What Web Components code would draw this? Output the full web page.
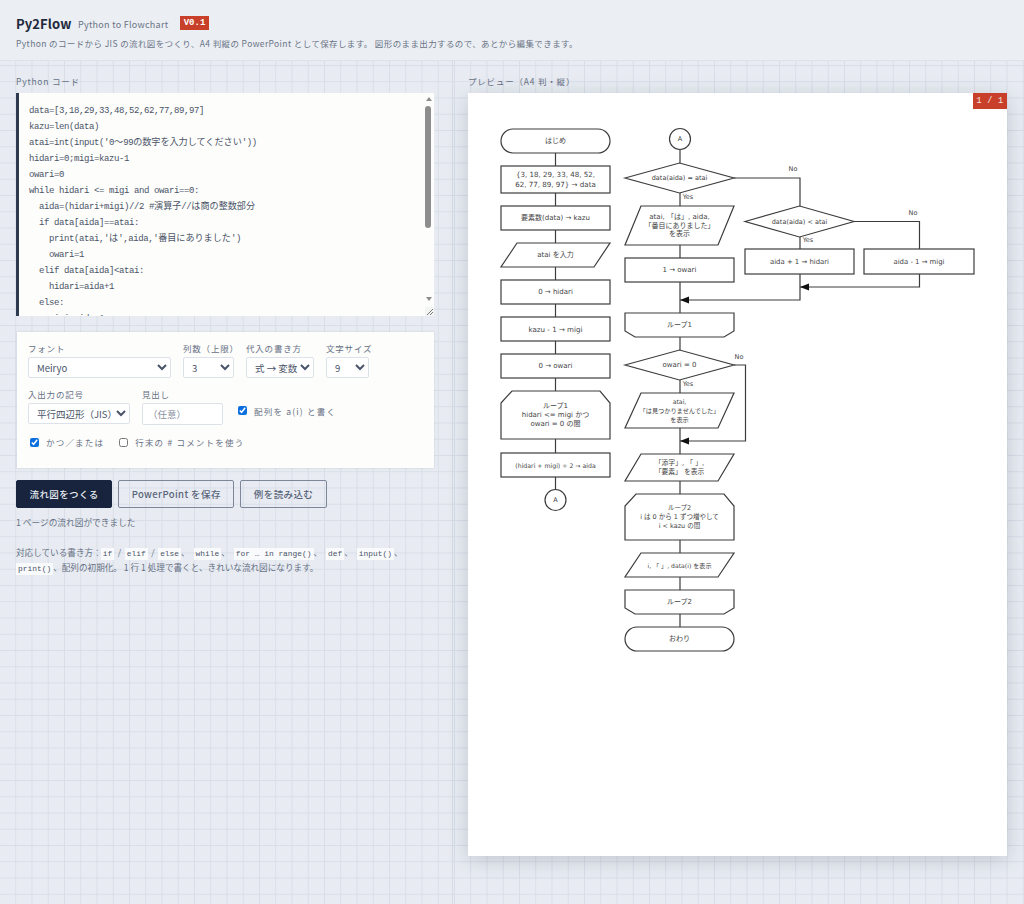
<!DOCTYPE html>
<html lang="ja">
<head>
<meta charset="utf-8">
<title>Py2Flow</title>
<style>
  html, body { margin: 0; padding: 0; }
  body {
    height: 904px;
    overflow: hidden;
    font-family: "Noto Sans CJK JP", "Noto Sans", sans-serif;
    color: #59647a;
    background-color: #e8ecf2;
    background-image:
      linear-gradient(#d8dde7 1px, transparent 1px),
      linear-gradient(90deg, #d8dde7 1px, transparent 1px);
    background-size: 16.25px 16.25px;
    background-position: 0 0, -1px 0;
  }
</style>
</head>
<body>
<py-app></py-app>

<script>
const MONO = `"Liberation Mono", "Noto Sans CJK JP", monospace`;

class AppHeader extends HTMLElement {
  constructor() {
    super();
    this.attachShadow({ mode: "open" });
    this.shadowRoot.innerHTML = `
    <style>
      :host { display: block; height: 61px; box-sizing: border-box; padding: 13px 16px 0; background: #ebeef3; border-bottom: 1px solid #dde2ea; }
      .top { display: flex; align-items: center; height: 20px; }
      h1 { margin: 0; width: 52px; font-size: 13px; font-weight: 700; letter-spacing: .1px; color: #20293c; white-space: nowrap; }
      .sub { margin-left: 10px; width: 90px; font-size: 9px; letter-spacing: .28px; color: #6a7486; padding-top: 2px; white-space: nowrap; }
      .ver { margin-left: 12px; width: 29px; height: 14px; display: flex; align-items: center; justify-content: center; background: #c8402a; color: #fff; font: 700 9px ${MONO}; }
      p { margin: 3px 0 0; font-size: 8.5px; line-height: 14px; letter-spacing: .38px; color: #6a7486; white-space: nowrap; }
    </style>
    <div class="top"><h1>Py2Flow</h1><span class="sub">Python to Flowchart</span><span class="ver">V0.1</span></div>
    <p><slot></slot></p>`;
  }
}

class SectionLabel extends HTMLElement {
  constructor() {
    super();
    this.attachShadow({ mode: "open" });
    this.shadowRoot.innerHTML = `
    <style>
      :host { display: block; height: 32px; box-sizing: border-box; padding-top: 13px; font-size: 8.5px; line-height: 14px; letter-spacing: .8px; color: #667084; }
    </style>
    <slot></slot>`;
  }
}

class CodeEditor extends HTMLElement {
  constructor() {
    super();
    this.attachShadow({ mode: "open" });
  }

  connectedCallback() {
    // latin stays half of the CJK width, like the reference's Japanese mono font
    const lines = this.textContent.replace(/^\n/, "").split("\n").map((line) => {
      const html = line.replace(/&/g, "&amp;").replace(/</g, "&lt;")
        .replace(/[\u3000-\u9fff\uff00-\uffef〜]+/g, (m) => `<span class="j">${m}</span>`);
      return `<div class="line">${html}</div>`;
    }).join("");
    this.shadowRoot.innerHTML = `
    <style>
      :host { display: flex; height: 223px; background: #fdfdfb; border-left: 3px solid #2d3a52; box-sizing: border-box; position: relative; overflow: hidden; }
      .code { flex: 1; padding: 10px 0 0 10px; font: 9px/16.03px ${MONO}; letter-spacing: -.4px; color: #4a5468; white-space: pre; overflow: hidden; }
      .line { height: 16.03px; }
      .j { font: 9.1px/0 "Noto Sans CJK JP", sans-serif; letter-spacing: 0; }
      .bar { width: 9px; position: relative; flex: none; }
      .up, .down { position: absolute; left: 1px; width: 0; height: 0; border-left: 3px solid transparent; border-right: 3px solid transparent; }
      .up { top: 4px; border-bottom: 4px solid #8d8d8d; }
      .down { top: 204px; border-top: 4px solid #8d8d8d; }
      .thumb { position: absolute; left: 0; top: 13px; width: 6px; height: 122px; border-radius: 3px; background: #8d8d8d; }
      .grip { position: absolute; right: 0; bottom: 0; width: 9px; height: 9px; background: #f3f4f4; }
      .grip svg { display: block; }
    </style>
    <div class="code">${lines}</div>
    <div class="bar"><div class="up"></div><div class="thumb"></div><div class="down"></div></div>
    <div class="grip"><svg width="9" height="9" viewBox="0 0 9 9"><path d="M2 8 8 2M5 8 8 5" stroke="#777" fill="none"/></svg></div>`;
  }
}

class SelectField extends HTMLElement {
  constructor() {
    super();
    this.attachShadow({ mode: "open" });
  }

  connectedCallback() {
    const options = (this.getAttribute("options") ?? "").split("|");
    const width = this.getAttribute("width") ?? "100";
    this.shadowRoot.innerHTML = `
    <style>
      :host { display: flex; flex-direction: column; gap: 3px; width: ${width}px; font-size: 8.5px; letter-spacing: .8px; color: #667084; white-space: nowrap; }
      label { line-height: 15px; height: 13px; }
      select { width: 100%; height: 21px; box-sizing: border-box; padding: 0 0 0 4px; border: 1px solid #dde2ea; border-radius: 2px; background-color: #fff; color: #4a5468; font: 9.5px "Noto Sans CJK JP", sans-serif; outline: none; }
    </style>
    <label>${this.getAttribute("label")}</label>
    <select>${options.map((o) => `<option>${o}</option>`).join("")}</select>`;
  }
}

class TextField extends HTMLElement {
  constructor() {
    super();
    this.attachShadow({ mode: "open" });
  }

  connectedCallback() {
    this.shadowRoot.innerHTML = `
    <style>
      :host { display: flex; flex-direction: column; gap: 3px; width: 81px; font-size: 8.5px; letter-spacing: .8px; color: #667084; }
      label { line-height: 15px; height: 13px; }
      input { width: 100%; height: 22px; box-sizing: border-box; padding: 0 5px; border: 1px solid #dde2ea; border-radius: 2px; background: #fff; font: 9.5px "Noto Sans CJK JP", sans-serif; outline: none; }
      input::placeholder { color: #8a92a2; }
    </style>
    <label>${this.getAttribute("label")}</label>
    <input placeholder="${this.getAttribute("placeholder")}">`;
  }
}

class CheckField extends HTMLElement {
  constructor() {
    super();
    this.attachShadow({ mode: "open" });
  }

  connectedCallback() {
    const checked = this.hasAttribute("checked") ? "checked" : "";
    this.shadowRoot.innerHTML = `
    <style>
      :host { display: inline-flex; align-items: center; gap: 7px; font-size: 8.5px; letter-spacing: 1.2px; color: #667084; white-space: nowrap; }
      input { margin: 0; width: 9px; height: 9px; accent-color: #0b6fe0; }
    </style>
    <input type="checkbox" ${checked}><span><slot></slot></span>`;
  }
}

class SettingsPanel extends HTMLElement {
  constructor() {
    super();
    this.attachShadow({ mode: "open" });
    this.shadowRoot.innerHTML = `
    <style>
      :host { display: block; height: 136px; box-sizing: border-box; margin: 16px 0 0 1px; padding: 9px 11px 0; background: #fdfdfb; box-shadow: 0 0 2px rgba(90,105,135,.25); }
      .row { display: flex; gap: 12px; }
      .row2 { margin-top: 9px; align-items: flex-start; }
      .side { padding-top: 9px; margin-left: 3px; }
      .row3 { margin-top: 11px; gap: 15px; padding-left: 2px; }
    </style>
    <div class="row">
      <select-field label="フォント" options="Meiryo" width="143"></select-field>
      <select-field label="列数（上限）" options="3" width="51"></select-field>
      <select-field label="代入の書き方" options="式 → 変数" width="68"></select-field>
      <select-field label="文字サイズ" options="9" width="43"></select-field>
    </div>
    <div class="row row2">
      <select-field label="入出力の記号" options="平行四辺形（JIS）" width="102"></select-field>
      <text-field label="見出し" placeholder="（任意）"></text-field>
      <div class="side"><check-field checked>配列を a(i) と書く</check-field></div>
    </div>
    <div class="row row3">
      <check-field checked>かつ／または</check-field>
      <check-field>行末の # コメントを使う</check-field>
    </div>`;
  }
}

class ToolButton extends HTMLElement {
  constructor() {
    super();
    this.attachShadow({ mode: "open" });
    this.shadowRoot.innerHTML = `
    <style>
      :host { display: block; }
      button { height: 28px; box-sizing: border-box; padding: 0 12.5px; border: 1px solid #7d8799; border-radius: 2px; background: transparent; color: #59647a; font: 500 9.5px "Noto Sans CJK JP", sans-serif; letter-spacing: .4px; white-space: nowrap; }
      :host([primary]) button { background: #18243d; border-color: #18243d; color: #e8ecf2; }
    </style>
    <button><slot></slot></button>`;
  }
}

class HelpNote extends HTMLElement {
  constructor() {
    super();
    this.attachShadow({ mode: "open" });
    this.shadowRoot.innerHTML = `
    <style>
      :host { display: block; margin-top: 15px; width: 410px; font-size: 8.6px; line-height: 14.4px; color: #667084; white-space: nowrap; }
    </style>
    <slot></slot>`;
  }
}

class CodeChip extends HTMLElement {
  constructor() {
    super();
    this.attachShadow({ mode: "open" });
    this.shadowRoot.innerHTML = `
    <style>
      :host { display: inline-block; padding: 0 2px; height: 12px; background: #f9fafb; font: 7.9px/12px ${MONO}; color: #4a5468; }
    </style>
    <slot></slot>`;
  }
}

// every node of the chart, in page pixels (the svg's viewBox is the page rect of the sheet)
const FLOW_NODES = [
  ["term", 501, 129, 610, 153, ["はじめ"], 7],
  ["box", 501, 166, 610, 193, ["{3, 18, 29, 33, 48, 52,", "62, 77, 89, 97} → data"], 7.1],
  ["box", 501, 206, 610, 230, ["要素数(data) → kazu"], 7],
  ["para", 501, 243, 610, 267, ["atai を入力"], 7],
  ["box", 501, 280, 610, 304, ["0 → hidari"], 7],
  ["box", 501, 317, 610, 341, ["kazu - 1 → migi"], 7.1],
  ["box", 501, 354, 610, 378, ["0 → owari"], 7],
  ["loopStart", 501, 391, 610, 439, ["ループ1", "hidari <= migi かつ", "owari = 0 の間"], 7],
  ["box", 501, 453, 610, 477, ["(hidari + migi) ÷ 2 → aida"], 6.2],
  ["circle", 555.5, 500, 10.5, 0, ["A"], 6.5],
  ["circle", 680, 139, 10.5, 0, ["A"], 6.5],
  ["diamond", 625, 163, 734, 193, ["data(aida) = atai"], 6.5],
  ["para", 625, 206, 734, 245, ["atai, 「は」, aida,", "「番目にありました」", "を表示"], 7],
  ["box", 625, 258, 734, 282, ["1 → owari"], 7],
  ["loopEnd", 625, 313, 734, 337, ["ループ1"], 7],
  ["diamond", 625, 350, 734, 380, ["owari = 0"], 7],
  ["para", 625, 393, 734, 428, ["atai,", "「は見つかりませんでした」", "を表示"], 6.2],
  ["para", 625, 454, 734, 481, ["「添字」, 「 」,", "「要素」 を表示"], 6.8],
  ["loopStart", 625, 494, 734, 540, ["ループ2", "i は 0 から 1 ずつ増やして", "i < kazu の間"], 6.5],
  ["para", 625, 553, 734, 577, ["i, 「 」, data(i) を表示"], 6.1],
  ["loopEnd", 625, 590, 734, 614, ["ループ2"], 7],
  ["term", 625, 627, 734, 651, ["おわり"], 7],
  ["diamond", 745, 206, 854, 237, ["data(aida) < atai"], 6.5],
  ["box", 745, 249, 854, 274, ["aida + 1 → hidari"], 6.9],
  ["box", 864, 249, 974, 274, ["aida - 1 → migi"], 6.9],
];

const FLOW_LINES = [
  "M555.5 153V166", "M555.5 193V206", "M555.5 230V243", "M555.5 267V280", "M555.5 304V317",
  "M555.5 341V354", "M555.5 378V391", "M555.5 439V453", "M555.5 477V489.5",
  "M680 149.5V163", "M680 193V206", "M680 245V258", "M680 282V313", "M680 337V350", "M680 380V393",
  "M680 428V454", "M680 481V494", "M680 540V553", "M680 577V590", "M680 614V627",
  "M734 178H800V206", "M800 237V249", "M854 221.5H919.5V249", "M800 274V300H680", "M919.5 274V287H800",
  "M734 365H745.5V441H680",
];

const FLOW_ARROWS = [[680, 300], [800, 287], [680, 441]];

const FLOW_TAGS = [
  ["Yes", 688, 197], ["Yes", 688, 384], ["Yes", 808, 240],
  ["No", 793, 169], ["No", 913, 213], ["No", 739, 357],
];

class FlowChart extends HTMLElement {
  constructor() {
    super();
    this.attachShadow({ mode: "open" });
  }

  shape([kind, x1, y1, x2, y2]) {
    const mid = (y1 + y2) / 2;
    const cx = (x1 + x2) / 2;
    switch (kind) {
      case "box": return `<rect x="${x1}" y="${y1}" width="${x2 - x1}" height="${y2 - y1}"/>`;
      case "term": return `<rect x="${x1}" y="${y1}" width="${x2 - x1}" height="${y2 - y1}" rx="12" ry="12"/>`;
      case "circle": return `<circle cx="${x1}" cy="${y1}" r="${x2}"/>`;
      case "para": return `<polygon points="${x1 + 16},${y1} ${x2},${y1} ${x2 - 16},${y2} ${x1},${y2}"/>`;
      case "diamond": return `<polygon points="${x1},${mid} ${cx},${y1} ${x2},${mid} ${cx},${y2}"/>`;
      case "loopStart": return `<polygon points="${x1 + 11},${y1} ${x2 - 10},${y1} ${x2},${y1 + 12} ${x2},${y2} ${x1},${y2} ${x1},${y1 + 12}"/>`;
      case "loopEnd": return `<polygon points="${x1},${y1} ${x2},${y1} ${x2},${y2 - 6} ${x2 - 10},${y2} ${x1 + 10},${y2} ${x1},${y2 - 6}"/>`;
    }
    return "";
  }

  label(node) {
    const [kind, x1, y1, x2, y2, lines, size] = node;
    const cx = kind === "circle" ? x1 : (x1 + x2) / 2;
    const cy = kind === "circle" ? y1 : (y1 + y2) / 2;
    const lh = Math.max(size, 7) * 1.27;
    const top = cy - (lines.length - 1) * lh / 2;
    return lines.map((text, i) => {
      const safe = text.replace(/&/g, "&amp;").replace(/</g, "&lt;");
      return `<text x="${cx}" y="${top + i * lh}" font-size="${size}">${safe}</text>`;
    }).join("");
  }

  connectedCallback() {
    const arrows = FLOW_ARROWS.map(([x, y]) => `<polygon class="tip" points="${x},${y} ${x + 9},${y - 3.5} ${x + 9},${y + 3.5}"/>`).join("");
    const tags = FLOW_TAGS.map(([t, x, y]) => `<text class="tag" x="${x}" y="${y}">${t}</text>`).join("");
    this.shadowRoot.innerHTML = `
    <style>
      :host { display: block; }
      svg { display: block; }
      .shapes * { fill: #fff; stroke: #3c3c3c; stroke-width: 1.2; }
      .lines path { fill: none; stroke: #3c3c3c; stroke-width: 1.2; }
      .tip { fill: #111; stroke: none; }
      text { font-family: "DejaVu Sans", "Noto Sans CJK JP", sans-serif; fill: #444; text-anchor: middle; dominant-baseline: central; }
      .tag { font-size: 6.5px; }
    </style>
    <svg width="539" height="763" viewBox="468 93 539 763">
      <g class="lines">${FLOW_LINES.map((d) => `<path d="${d}"/>`).join("")}</g>
      <g class="shapes">${FLOW_NODES.map((n) => this.shape(n)).join("")}</g>
      ${arrows}${FLOW_NODES.map((n) => this.label(n)).join("")}${tags}
    </svg>`;
  }
}

class PreviewSheet extends HTMLElement {
  constructor() {
    super();
    this.attachShadow({ mode: "open" });
    this.shadowRoot.innerHTML = `
    <style>
      :host { display: block; position: relative; width: 539px; height: 763px; background: #fff; box-shadow: 0 4px 20px rgba(40,52,78,.2); }
      .page { position: absolute; top: 0; right: 0; width: 34px; height: 16px; display: flex; align-items: center; justify-content: center; background: #c8402a; color: #f3e6e2; font: 8.5px ${MONO}; letter-spacing: .3px; }
    </style>
    <div class="page">1 / 1</div>
    <slot></slot>`;
  }
}

class PyApp extends HTMLElement {
  constructor() {
    super();
    this.attachShadow({ mode: "open" });
    this.shadowRoot.innerHTML = `
    <style>
      :host { display: block; }
      main { display: grid; grid-template-columns: 453px 1fr; height: 843px; }
      .left { padding: 0 18px 0 16px; border-right: 1px solid #d5dbe5; }
      .right { padding: 0 17px 0 15px; }
      .actions { display: flex; gap: 6px; margin-top: 11px; }
      .status { margin-top: 8px; font-size: 8.7px; line-height: 14px; color: #667084; }
      .sep { display: inline-block; width: 10.5px; text-align: center; }
      .com { display: inline-block; width: 12.5px; }
      .lead { margin-right: -1px; }
    </style>
    <app-header>Python のコードから JIS の流れ図をつくり、A4 判縦の PowerPoint として保存します。 図形のまま出力するので、あとから編集できます。</app-header>
    <main>
      <section class="left">
        <section-label>Python コード</section-label>
        <code-editor>
data=[3,18,29,33,48,52,62,77,89,97]
kazu=len(data)
atai=int(input('0〜99の数字を入力してください'))
hidari=0;migi=kazu-1
owari=0
while hidari &lt;= migi and owari==0:
  aida=(hidari+migi)//2 #演算子//は商の整数部分
  if data[aida]==atai:
    print(atai,'は',aida,'番目にありました')
    owari=1
  elif data[aida]&lt;atai:
    hidari=aida+1
  else:
    migi=aida-1</code-editor>
        <settings-panel></settings-panel>
        <div class="actions">
          <tool-button primary>流れ図をつくる</tool-button>
          <tool-button>PowerPoint を保存</tool-button>
          <tool-button>例を読み込む</tool-button>
        </div>
        <div class="status">1 ページの流れ図ができました</div>
        <help-note><span class="lead">対応している書き方：</span><code-chip>if</code-chip><span class="sep">/</span><code-chip>elif</code-chip><span class="sep">/</span><code-chip>else</code-chip><span class="com">、</span><code-chip>while</code-chip><span class="com">、</span><code-chip>for … in range()</code-chip><span class="com">、</span><code-chip>def</code-chip><span class="com">、</span><code-chip>input()</code-chip><span class="com">、</span><br><code-chip>print()</code-chip>、配列の初期化。 1 行 1 処理で書くと、きれいな流れ図になります。</help-note>
      </section>
      <section class="right">
        <section-label>プレビュー（A4 判・縦）</section-label>
        <preview-sheet><flow-chart></flow-chart></preview-sheet>
      </section>
    </main>`;
  }
}

customElements.define("app-header", AppHeader);
customElements.define("section-label", SectionLabel);
customElements.define("code-editor", CodeEditor);
customElements.define("select-field", SelectField);
customElements.define("text-field", TextField);
customElements.define("check-field", CheckField);
customElements.define("settings-panel", SettingsPanel);
customElements.define("tool-button", ToolButton);
customElements.define("help-note", HelpNote);
customElements.define("code-chip", CodeChip);
customElements.define("flow-chart", FlowChart);
customElements.define("preview-sheet", PreviewSheet);
customElements.define("py-app", PyApp);
</script>
</body>
</html>
